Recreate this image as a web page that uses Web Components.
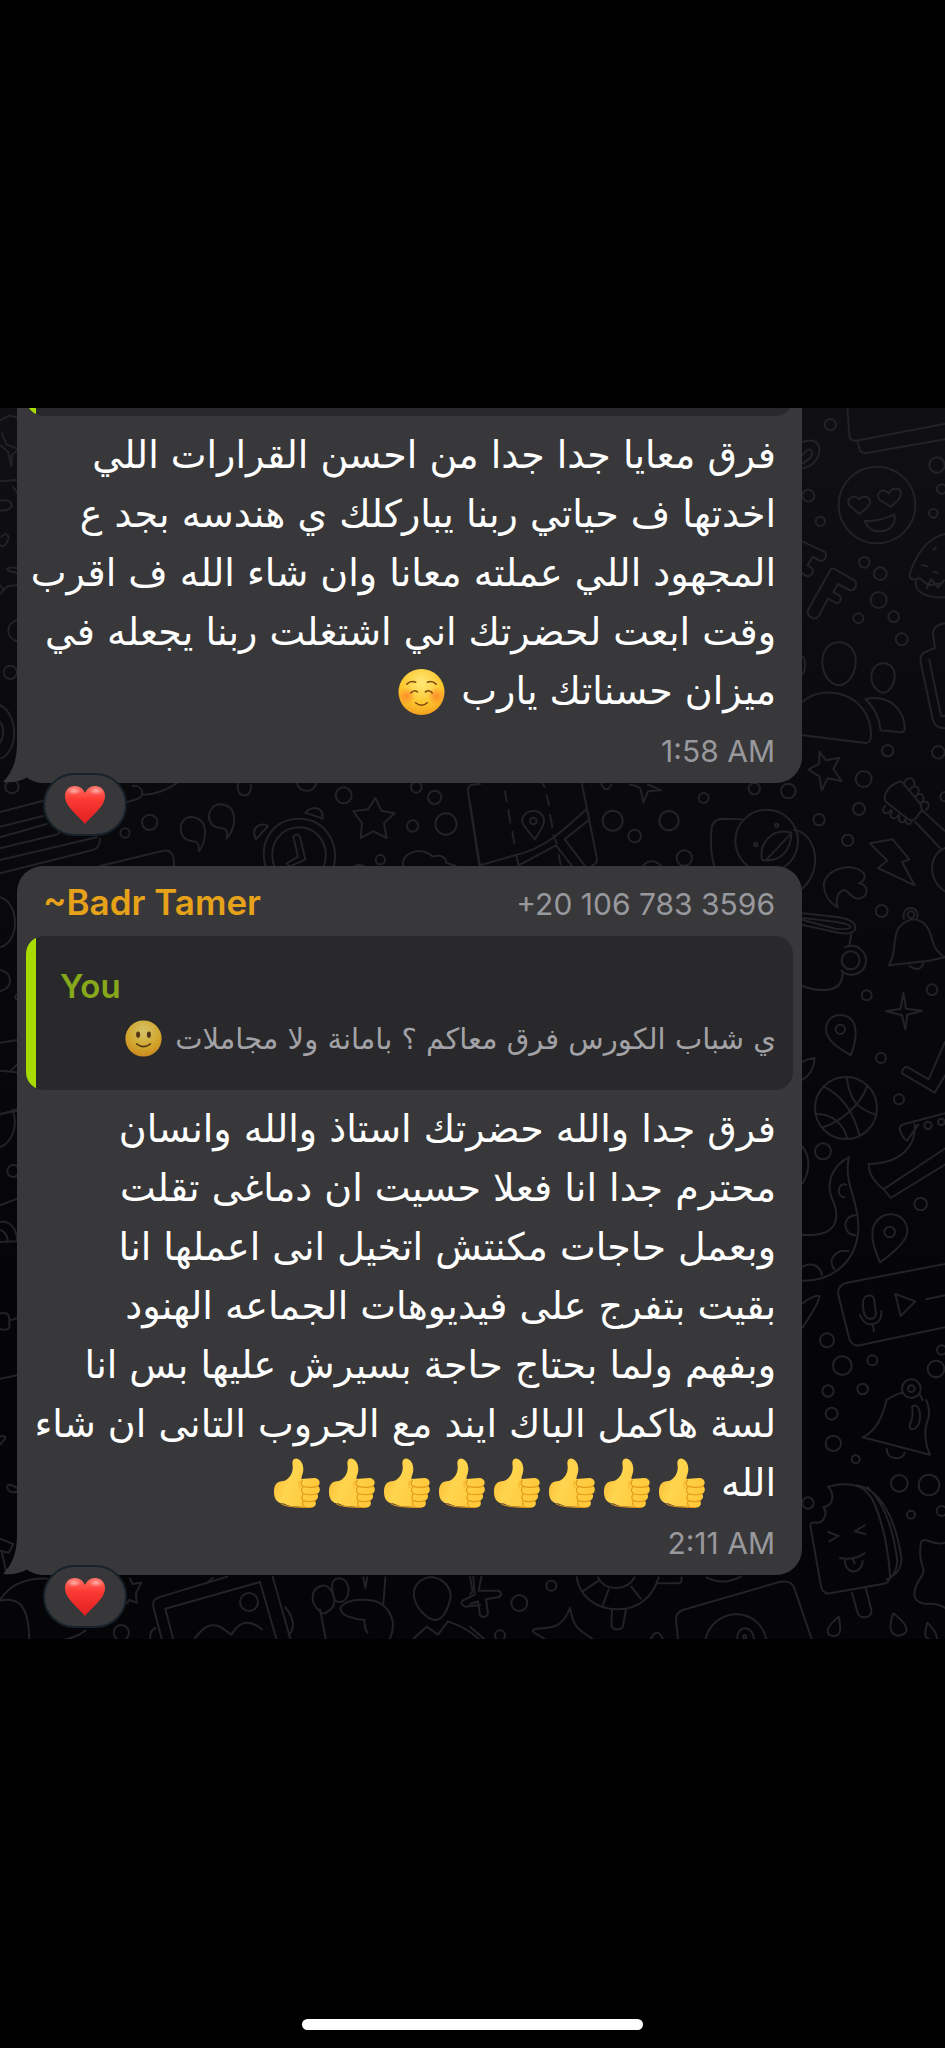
<!DOCTYPE html>
<html lang="ar">
<head>
<meta charset="utf-8">
<meta name="viewport" content="width=device-width, initial-scale=1">
<title>Group chat</title>
<style>
  html, body { margin: 0; background: #000; }
  body { min-height: 100vh; font-family: Inter, "DejaVu Sans", sans-serif; color: #fff; }
</style>
</head>
<body>
<phone-screen>
  <chat-thread>
    <message-bubble>
      <quoted-message slot="quote" clipped></quoted-message>
      <message-text>فرق معايا جدا جدا من احسن القرارات اللي<br>اخدتها ف حياتي ربنا يباركلك ي هندسه بجد ع<br>المجهود اللي عملته معانا وان شاء الله ف اقرب<br>وقت ابعت لحضرتك اني اشتغلت ربنا يجعله في<br>ميزان حسناتك يارب <emoji-icon kind="blush"></emoji-icon></message-text>
      <span slot="time">1:58 AM</span>
      <emoji-icon slot="reaction" kind="heart"></emoji-icon>
    </message-bubble>
    <message-bubble>
      <message-sender slot="sender" phone="+20 106 783 3596">~Badr Tamer</message-sender>
      <quoted-message slot="quote">
        <span slot="author">You</span>
        ي شباب الكورس فرق معاكم ؟ بامانة ولا مجاملات <emoji-icon kind="smile"></emoji-icon>
      </quoted-message>
      <message-text>فرق جدا والله حضرتك استاذ والله وانسان<br>محترم جدا انا فعلا حسيت ان دماغى تقلت<br>وبعمل حاجات مكنتش اتخيل انى اعملها انا<br>بقيت بتفرج على فيديوهات الجماعه الهنود<br>وبفهم ولما بحتاج حاجة بسيرش عليها بس انا<br>لسة هاكمل الباك ايند مع الجروب التانى ان شاء<br>الله <emoji-icon kind="thumb"></emoji-icon><emoji-icon kind="thumb"></emoji-icon><emoji-icon kind="thumb"></emoji-icon><emoji-icon kind="thumb"></emoji-icon><emoji-icon kind="thumb"></emoji-icon><emoji-icon kind="thumb"></emoji-icon><emoji-icon kind="thumb"></emoji-icon><emoji-icon kind="thumb"></emoji-icon></message-text>
      <span slot="time">2:11 AM</span>
      <emoji-icon slot="reaction" kind="heart"></emoji-icon>
    </message-bubble>
  </chat-thread>
</phone-screen>

<script>
function define(name, html, setup) {
  const template = document.createElement('template');
  template.innerHTML = html;
  customElements.define(name, class extends HTMLElement {
    constructor() {
      super();
      this.attachShadow({ mode: 'open' }).append(template.content.cloneNode(true));
    }
    connectedCallback() { if (setup) setup(this, this.shadowRoot); }
  });
}

define('phone-screen', `
<style>
  :host { display: flex; flex-direction: column; box-sizing: border-box; min-height: 100vh; padding: 408px 0 18px; background: #000; }
  .home { width: 36%; height: 11px; margin: auto auto 0; border-radius: 6px; background: #fff; }
</style>
<slot></slot>
<div class="home"></div>`);

define('chat-thread', `
<style>
  :host { display: flex; flex-direction: column; gap: 83px; position: relative; overflow: hidden; padding: 0 143px 64px 17px; }
  chat-wallpaper { position: absolute; inset: 0; }
</style>
<chat-wallpaper></chat-wallpaper>
<slot></slot>`);

/* Doodle wallpaper, drawn in strips at three units per pixel. */
define('chat-wallpaper', `
<style>
  :host { display: block; background: linear-gradient(#100f14, #0a0a0d 30%, #050507 75%, #050507); }
  svg { display: block; width: 100%; height: 100%; }
</style>
<svg viewBox="0 408 945 1232" preserveAspectRatio="xMidYMin slice" fill="none" stroke="#232327" stroke-width="6" stroke-linecap="round" stroke-linejoin="round" aria-hidden="true">
  <g transform="translate(0 400) scale(.333333)">
    <path d="M0 60l30-14 22 8M6 100l14 34 28 10M0 135l24 20 10 42M50 152l-14 12-2 34M0 244l52-4M40 262l12 16M0 302c20-5 36 4 36 14s-20 17-36 15M4 410c12-14 26-6 20 10s-16 22-24 16M52 504c-30-4-40 4-22 10l22 4M0 556l10 10-6 14M52 555l-30 4-14 15M52 660c-36 10-36 55 0 64M0 915c56 30 56 135 4 160M0 966c14 14 12 50-2 64"/>
    <circle cx="31" cy="817" r="20"/><circle cx="36" cy="1160" r="20"/>
  </g>
  <g transform="translate(470 400) scale(.333333)">
    <circle cx="1081" cy="74" r="17"/><circle cx="1401" cy="195" r="23"/><circle cx="1415" cy="267" r="14"/><circle cx="1390" cy="340" r="13"/><circle cx="1015" cy="287" r="18"/><circle cx="1051" cy="364" r="14"/><circle cx="1183" cy="487" r="16"/><circle cx="1231" cy="521" r="19"/><circle cx="1226" cy="600" r="24"/><circle cx="1165" cy="655" r="15"/><circle cx="1271" cy="650" r="16"/><circle cx="1295" cy="718" r="18"/><circle cx="1253" cy="1052" r="17"/><circle cx="1405" cy="1057" r="19"/>
    <path d="M1132 20l6 88q3 16 22 14l270-52M1162 124l8 26q4 11 20 9l240-42M998 126c30-12 50 0 50 24s-20 50-50 55M998 165c20-28 35-16 24 7l-24 18"/>
    <circle cx="1221" cy="315" r="115"/>
    <path d="M1168 342l-30-26c-12-22 13-34 30-18 8-14 34-8 32 10q-3 15-32 34zM1262 320l-33-20c-15-22 10-39 28-20 7-18 35-18 36 0q0 18-31 40zM1184 362q35 5 89-18c6 22-9 49-42 50-24 2-39-10-47-32z"/>
    <path d="M998 425l64 30q10 5 4 18t-18 8l-20-10-15 25 12 8q8 10-1 20t-22 0l-4-3M1092 506l62 36q8 8 2 20t-18 8l-34-18-14 24 18 10q8 8 2 18t-14 4l-22-12-28 52q-8 12-22 4t-10-22l66-118q4-8 12-6z"/>
    <path d="M1425 402c-50 10-88 60-107 124q4 20 30 8l28 22 40-6M1338 540c-6 30 20 55 87 52M1390 450l8-8M1355 495l18 4M1390 515l12 3M1370 565l14-28 20 26 18-22"/>
    <path d="M1107 727c32 0 53 28 50 63s-24 65-50 65-48-30-50-65 18-63 50-63zM1240 790c22 0 36 18 34 42s-18 46-34 46-36-22-36-46 14-42 36-42zM998 905c70-60 205-20 205 100q0 28-22 23l-183-22M1186 897c80-15 120 40 118 92q-2 10-18 7l-54-5c-4-34-14-62-46-94zM998 770c10 10 10 34 0 54"/>
    <path d="M1425 670q-38 6-36 34l6 40-30 12q-18 8-12 35l36 170q6 24 36 24M1378 780l34 162q6 12 16 2"/>
    <path d="M1048 1054l20 27 40-8-18 34 25 36-42-8-18 36-7-42-33-20 33-18z"/>
  </g>
  <g transform="translate(0 760) scale(.333333)">
    <circle cx="449" cy="187" r="23"/><circle cx="375" cy="219" r="14"/><circle cx="1031" cy="106" r="24"/><circle cx="1249" cy="82" r="16"/><circle cx="1304" cy="112" r="20"/><circle cx="1238" cy="198" r="17"/><circle cx="1338" cy="192" r="32"/><circle cx="1141" cy="299" r="14"/>
    <path d="M0 156l140-36M0 200l130-32M0 232l140-40M0 265l165-40q16-4 14-18M0 300l290-68M0 340l278-70q22-6 22-34M300 318l190-46q34-6 32 46M398 78c30-4 40 30 12 40l-28 8M430 104c40 0 70-16 100-34M714 72c-4 20 4 34 20 34s20-18 18-32M890 70c12 30 48 30 60 0"/>
    <path d="M596 274c24-26 34-100-22-103-42 0-44 68 0 72 20 2 24 8 22 31zM680 236c26-26 40-98-18-103-44 0-48 67-4 70 22 2 26 10 22 33z"/>
    <path d="M796 318c-20-80 28-142 102-142s120 70 104 142M822 318c-20-70 24-116 76-116s94 50 74 116M880 230q12-14 20 2l16 66-46 22-10-10 34-20zM768 238c-20-40 20-52 36-40zM916 158c20-22 54-20 52 18zM1066 318q12-6 24 0"/>
    <path d="M1126 114l18 38 40 8-32 30 8 44-40-20-38 20 4-44-26-36 44-6zM1210 318c-10-40 56-62 88-28 26-8 42 4 40 18l30 10M1440 72l-24 2q-14 4-12 22l34 222"/>
    <path d="M0 412c60 16 60 136 0 150M0 630c40 10 40 52 0 64M52 703q-12 6-2 16M0 848l52-8M0 932l52 5M30 935l22-22M0 1062l52-10"/>
  </g>
  <g transform="translate(470 760) scale(.333333)">
    <circle cx="1181" cy="57" r="24"/><circle cx="1167" cy="147" r="18"/><circle cx="955" cy="93" r="22"/><circle cx="853" cy="86" r="17"/><circle cx="1047" cy="179" r="17"/><circle cx="1133" cy="241" r="17"/><circle cx="428" cy="182" r="30"/><circle cx="597" cy="182" r="29"/><circle cx="494" cy="228" r="19"/><circle cx="701" cy="114" r="15"/><circle cx="643" cy="294" r="23"/><circle cx="1235" cy="453" r="18"/><circle cx="1190" cy="706" r="15"/><circle cx="1386" cy="689" r="16"/><circle cx="1233" cy="894" r="15"/><circle cx="1287" cy="1018" r="15"/><circle cx="1425" cy="110" r="14"/>
    <path d="M0 130l30 186 105-30c90-22 140-70 216-140M336 72l45 224q0 16-14 20M140 290l6 26 112-60 48 62M354 182l-70 56 60 78M250 226l10 24M105 94l5 30M115 150l6 38M127 215l6 34M218 72l6 8M230 106l7 30M240 165l7 36M266 284l6 30M518 318q26-28 56 0M394 72q14 30 30 2M480 74q28 4 32 14l8 40 14-34 40-3-40-18"/>
    <path d="M194 238c-20-26-38-44-38-56 6-42 64-38 66 0q0 16-28 56z"/><circle cx="190" cy="183" r="10"/>
    <circle cx="890" cy="243" r="94"/>
    <path d="M816 178l-58-2q-34 2-34 38-4 60 8 102M972 210c60 6 94 110 26 175M876 300c-10-50 30-98 88-82 0 52-32 90-88 82zM890 298l70-74"/><circle cx="857" cy="254" r="5"/><circle cx="920" cy="196" r="5"/>
    <path d="M1286 66c-30 10-50 40-38 60l70 54q12 4 20-6l16-22q4-10-6-24l-50-60q-6-6-12-2zM1302 72c8-28 36-18 30 2M1318 92c14-26 38-8 24 12M1334 112c16-22 36-4 22 14M1352 130c18-16 34 6 16 20M1246 138c-18 14 4 34 16 12M1266 154c-14 20 10 30 20 10M1288 168c-8 18 14 28 20 8M1304 180q10 22 20 6M1358 152l70 64M1336 186l74 78M1425 264c-54 22-50 100 0 130"/>
    <path d="M1200 250l68-12 50 60-22 8 38 70-110-52 28-22zM1104 442c-10-20 0-50 18-52 18 4 20 28 46 26 34-10 24-46-2-46q20-6 18-26c-24-36-106-28-122 24-2 34 16 60 42 74z"/>
    <path d="M998 460l110 12q50 10 48 32t-50 14L998 495M1000 474l100 12q44 8 42 16t-46 4l-98-26M1144 524l-7 36M1118 634q2 54-52 56-34 2-68-12"/><circle cx="1142" cy="601" r="27"/><path d="M1124 562c38-16 66 16 64 42-4 42-50 50-74 28"/>
    <path d="M1257 616q14-26 16-60c4-44 12-66 52-78 40 0 54 28 62 64q8 32 38 50l-48 10zM1318 618q30 22 42-8M1302 476c-6-26 10-32 22-32s24 14 16 34"/><circle cx="1323" cy="464" r="10"/>
    <path d="M1300 698l8 48 48 6-44 12-6 44-10-42-48-12 44-8zM1142 886c-34-20-74-44-74-78 0-56 84-58 88 0q4 34-14 78zM998 905q20-10 36-12c0 24-12 50-36 66M1296 940q2-22 18-18l62 36 49-112M1296 940l98 58 31-52"/><circle cx="1111" cy="808" r="14"/>
    <circle cx="1128" cy="1044" r="93"/><path d="M1062 980c60 30 90 80 106 146M1130 952c10 70 30 92 86 112M1192 976c-20 60-80 110-134 126M1036 1062c50-2 84 30 96 74"/>
  </g>
  <g transform="translate(0 1100) scale(.333333)">
    <path d="M0 44l50-16M38 30c20 60-10 100-38 112M0 316l52-20M0 366c30-6 50 20 52 58l-52 2M0 390q20 4 24 35M0 640h16q12 0 12 20v22q-4 10-28 6M28 662l24-8M0 836l52-10M0 1010q20-6 14 8l-14 16M52 1165q-32-20-30-2 4 18 30 12"/><circle cx="40" cy="213" r="18"/>
  </g>
  <g transform="translate(470 1100) scale(.333333)">
    <circle cx="1059" cy="154" r="24"/><circle cx="1352" cy="312" r="19"/><circle cx="1071" cy="721" r="21"/><circle cx="1117" cy="797" r="28"/><circle cx="1207" cy="781" r="15"/><circle cx="1398" cy="807" r="25"/><circle cx="1074" cy="873" r="17"/><circle cx="1178" cy="867" r="16"/><circle cx="1415" cy="750" r="14"/><circle cx="1374" cy="76" r="11"/><circle cx="1414" cy="66" r="10"/>
    <path d="M1425 40l-122 32q-14 4-14 14 6 26 22 36l34-48M1334 72c6 64-40 118-138 120q-2 38 44 76l185-122M1240 266l22 28 163-100"/>
    <path d="M1137 172c-48 22-72 78-50 126 18 40 18 80-18 98q-30 12-71 8M1137 172c-18 80 32 130 28 216-6 100-80 156-167 154M1128 254c-26-8-30 38-4 38M1156 346c-40 0-40 58 0 60M1136 454c-40-10-66 30-42 54M998 500c30-16 54 0 58 26M998 610q34-26 50-22 2 16-50 94M998 140q34 50 0 110"/>
    <path d="M1230 487q-28-60-22-98c14-64 102-60 104 4q0 36-82 94z"/><circle cx="1259" cy="396" r="16"/>
    <path d="M1425 492l-294 56q-30 8-26 36l32 130q8 26 32 22l256-54M1186 590q20-10 26 6l6 44q-2 18-18 16-14 0-18-16-8-38 4-50zM1170 645q12 30 36 28 30-4 28-40M1208 672l4 22M1276 582l60 22-44 44zM1370 598l55-12"/>
    <circle cx="1324" cy="866" r="28"/><circle cx="1324" cy="866" r="10"/><path d="M1250 900c30-20 40-22 50-22M1348 880l10 20"/>
  </g>
  <g transform="translate(0 1400) scale(.333333)">
    <path d="M0 416l40 16-14 26-26-6M6 460l12 52 28-20M0 600c30-46 80-66 140-64M0 602c60-14 86 20 88 118M190 720q40-8 66-28M390 536l8 16 26-4-16 32 2 28-22-8-6 10"/>
    <circle cx="364" cy="698" r="23"/><path d="M486 720l-26-100q-4-20 16-28l206-62M520 720l-24-94 284-80 50 174M818 530l54 190M584 716c26-36 50-50 80-34l30 22c26-46 60-44 92-16M620 550l18-16M856 622q40 50 10 84M466 684q-20 10-14 36"/><circle cx="747" cy="606" r="27"/>
    <path d="M978 720l-18-92M960 634c-30-24-30-64 2-76s56 50 30 70-16 12-32 6M996 558c0-30 40-32 48 0s-12 50-28 48-18-24-20-48M1090 532l6 32 6-32M1156 532l-6 80M1100 600q-60-4-78 22c-6 26 46 36 72 38 0 10-4 22 8 38M1100 600c60 0 98 60 68 120M1300 532c34 6 58 36 50 68s-24 62-46 60-58-36-62-72 28-60 58-56zM1240 716l40-36 34 24 30-40q60 20 96 56M1420 530l4 54-36 18q-10 10 8 18l44-5"/>
  </g>
  <g transform="translate(470 1400) scale(.333333)">
    <circle cx="1085" cy="41" r="18"/><circle cx="1090" cy="130" r="23"/><circle cx="1157" cy="178" r="12"/><circle cx="1288" cy="250" r="25"/><circle cx="1377" cy="255" r="31"/><circle cx="1323" cy="344" r="12"/><circle cx="1415" cy="333" r="15"/><circle cx="1014" cy="309" r="17"/><circle cx="244" cy="557" r="15"/><circle cx="148" cy="609" r="24"/><circle cx="90" cy="706" r="15"/>
    <path d="M1250 0c-14 50-28 90-72 112l202 52q-26-60-4-112 4-28-8-52M1250 146c0 36 50 36 54 12M1326 20c20-14 28 20 22 46-8 26-34 30-28 6q12-26 6-52z"/>
    <path d="M1074 260c80-20 118 2 140 52 22 54 40 130 46 212q2 24-22 28l-158 28q-18 2-26-16l-32-180q-4-20 14-16c24 4 40-28 24-46 32-6 34-40 14-62zM1160 256c70 10 116 98 134 216 2 40-20 56-44 66M1260 536q30-30 18-80-20-130-84-194M1146 578l16 58c6 24 46 20 42-6l-16-64M1074 396l32 12-28 16M1184 376l-30 18 32 8M1110 474q40 8 74-14M1124 476c0 54 54 46 54 6M1148 476l6 14"/>
    <path d="M1425 428c-46 14-74-38-74 20-6 60 28 50-6 96q-32 60 22 68 36-4 58 12M1106 650c-50 40-34 58-14 58 24 0 20-28 14-58zM1270 640c-22 60 4 70 22 66 28-8 24-30-22-66zM1372 668c-14 50 0 46 8 52M1372 668q30 30 30 52"/>
    <path d="M320 532c8 50 50 96 122 96s110-46 124-96M384 532c20 42 86 44 110 0M386 542l-48 32M398 616l18-48M512 596l-28-36M560 550l66 0q12-4 8-18M426 630l-2 44q4 16 20 14 14 0 16-16l8-44M710 532q50 26 102-2M0 530l8 44-8 8M34 530l-8 42 60 0q16 12-2 20l-36 6 6 44q-10 16-24 4l-6-42-24 8M300 624c8 34 10 50 30 66l38 28M300 624c-22 56-46 60-102 62q-18 4-2 14l30 18M0 680l44 38M540 720q22-44 40 0"/>
    <path d="M624 720l-6-64q0-18 20-26l290-84q34-6 44 16l54 158M706 720c20-96 158-110 184 0M802 720c-4-48 50-46 50 0"/><circle cx="824" cy="710" r="5"/>
  </g>
</svg>`);

define('message-bubble', `
<style>
  :host { display: block; position: relative; padding: 0 9px; border-radius: 0 0 26px 26px; background: #38383a; }
  :host(:last-of-type) { border-radius: 26px; }
  .time { padding: 12px 18px 14px; font-size: 30px; line-height: 36px; text-align: right; color: #98989d; }
  .tail { position: absolute; left: -15px; bottom: 0; width: 45px; height: 40px; }
  button { position: absolute; left: 26px; bottom: -53px; box-sizing: border-box; width: 84px; height: 63px; display: flex; align-items: center; justify-content: center; padding: 0; border: 2px solid #17222b; border-radius: 32px; background: #38383a; }
</style>
<svg class="tail" viewBox="0 0 45 40" aria-hidden="true"><path d="M15 0C15 18 10 30 1 39 11 40 19 38 26 34Q34 40 45 40V0z" fill="#38383a"/></svg>
<slot name="sender"></slot>
<slot name="quote"></slot>
<slot></slot>
<div class="time"><slot name="time"></slot></div>
<button type="button" aria-label="Reaction"><slot name="reaction"></slot></button>`);

define('message-sender', `
<style>
  :host { display: flex; align-items: baseline; justify-content: space-between; height: 40px; padding: 16px 18px 14px 17px; line-height: 40px; }
  .name { font-size: 35px; font-weight: 600; color: #e6a219; }
  .phone { font-size: 30px; color: #98989d; }
</style>
<span class="name"><slot></slot></span>
<span class="phone"></span>`, (host, root) => {
  root.querySelector('.phone').textContent = host.getAttribute('phone');
});

define('quoted-message', `
<style>
  :host { display: block; }
  .box { box-sizing: border-box; min-height: 154px; padding: 28px 17px 20px 34px; border-radius: 18px; background: linear-gradient(to right, #a8dc00 10px, #29292b 10px); }
  .author { font-size: 33px; line-height: 44px; font-weight: 600; color: #86a81a; }
  .text { font-family: "DejaVu Sans", sans-serif; font-size: 29px; line-height: 62px; white-space: nowrap; color: #a2a2a7; }
  :host([clipped]) { display: flex; align-items: flex-end; height: 8px; overflow: hidden; }
  :host([clipped]) .box { flex: 1; }
</style>
<div class="box">
  <div class="author"><slot name="author"></slot></div>
  <div class="text" dir="rtl"><slot></slot></div>
</div>`);

define('message-text', `
<style>
  :host { display: block; padding: 10px 17px 0; font-family: "DejaVu Sans", sans-serif; font-size: 38px; line-height: 59px; white-space: nowrap; color: #fff; }
</style>
<div dir="rtl"><slot></slot></div>`);

const face = id => `
  <defs>
    <radialGradient id="${id}" cx=".5" cy=".3" r=".75"><stop offset="0" stop-color="#ffe978"/><stop offset=".6" stop-color="#fdc62d"/><stop offset="1" stop-color="#f19a1d"/></radialGradient>
    <radialGradient id="cheek"><stop offset="0" stop-color="#ff7a2a" stop-opacity=".75"/><stop offset="1" stop-color="#ff7a2a" stop-opacity="0"/></radialGradient>
  </defs>
  <circle cx="24" cy="24" r="23.5" fill="url(#${id})"/>`;

const emoji = {
  blush: { label: '☺️', box: '0 0 48 48', art: face('skin') + `
    <circle cx="9" cy="28" r="9" fill="url(#cheek)"/><circle cx="39" cy="28" r="9" fill="url(#cheek)"/>
    <g fill="none" stroke="#80460f" stroke-width="1.600" stroke-linecap="round"><path d="M9 16q4-4 9-2M30 14q5-2 9 2M13 25q4-4 7-1M28 24q4-3 7 1M18 35q6 5 12 0"/></g>` },
  smile: { label: '🙂', box: '0 0 48 48', art: face('skin') + `
    <g fill="#5f3a12"><ellipse cx="17" cy="19" rx="2.600" ry="4"/><ellipse cx="31" cy="19" rx="2.600" ry="4"/></g>
    <path d="M15 31q9 7 18 0" fill="none" stroke="#5f3a12" stroke-width="2" stroke-linecap="round"/>` },
  heart: { label: '❤️', box: '0 0 40 40', art: `
    <defs>
      <linearGradient id="red" x2="0" y2="1"><stop offset="0" stop-color="#ff7468"/><stop offset=".35" stop-color="#fb3a34"/><stop offset="1" stop-color="#e01f20"/></linearGradient>
      <radialGradient id="shine"><stop offset="0" stop-color="#fff" stop-opacity=".5"/><stop offset="1" stop-color="#fff" stop-opacity="0"/></radialGradient>
    </defs>
    <path d="M20 39C14 31 0 22 0 11 0 5 4 1 10 1c5 0 8 3 10 7 2-4 5-7 10-7 6 0 10 4 10 10 0 11-14 20-20 28z" fill="url(#red)"/>
    <ellipse cx="9" cy="6" rx="7" ry="4" fill="url(#shine)"/><ellipse cx="31" cy="6" rx="7" ry="4" fill="url(#shine)"/>` },
  thumb: { label: '👍', box: '0 0 48 50', art: `
    <defs><linearGradient id="hand" x1="0" x2="1" y2=".4"><stop offset="0" stop-color="#f9b52b"/><stop offset=".45" stop-color="#ffd54f"/><stop offset="1" stop-color="#ffc93a"/></linearGradient></defs>
    <path d="M1 34C1 27 4 23 11 23 17 21 21 14 20 7 19 2 21 0 24 0c4 1 7 5 7 11 0 4-2 7-2 10l13-1c6 0 7 6 4 8 3 2 2 7-1 8 2 2 1 6-2 7 2 4 0 7-4 7l-15-1c-6 0-9-1-13-3C4 46 1 41 1 34z" fill="url(#hand)"/>
    <path d="M28 23c-2 2-2 5 0 7" fill="none" stroke="#f5ad25" stroke-opacity=".5" stroke-width="2"/>
    <path d="M31 28.500q7 2 15 0M31 36q7 2 14 0M31 43q6 2 12 0M30 22q-3 4 1 6.500-4 4 0 7.500-3 4 0 7-2 4 1 6" fill="none" stroke="#e39a1c" stroke-width="1.200" stroke-linecap="round"/>
    <path d="M8 46c4 3 14 4 31 4" fill="none" stroke="#ee9d1c"/>` }
};

define('emoji-icon', `
<style>
  :host { display: inline-block; line-height: 0; width: 47px; height: 48px; margin: 0 4px; vertical-align: -12px; }
  :host([kind="thumb"]) { height: 50px; }
  :host([kind="heart"]) { width: 40px; height: 40px; margin: 0; }
  :host([kind="smile"]) { width: 37px; height: 37px; vertical-align: -8px; opacity: .8; }
  svg { display: block; width: 100%; height: 100%; }
</style>
<svg role="img"></svg>`, (host, root) => {
  const icon = emoji[host.getAttribute('kind')];
  const svg = root.querySelector('svg');
  svg.setAttribute('viewBox', icon.box);
  svg.setAttribute('aria-label', icon.label);
  svg.innerHTML = icon.art;
});
</script>
</body>
</html>
